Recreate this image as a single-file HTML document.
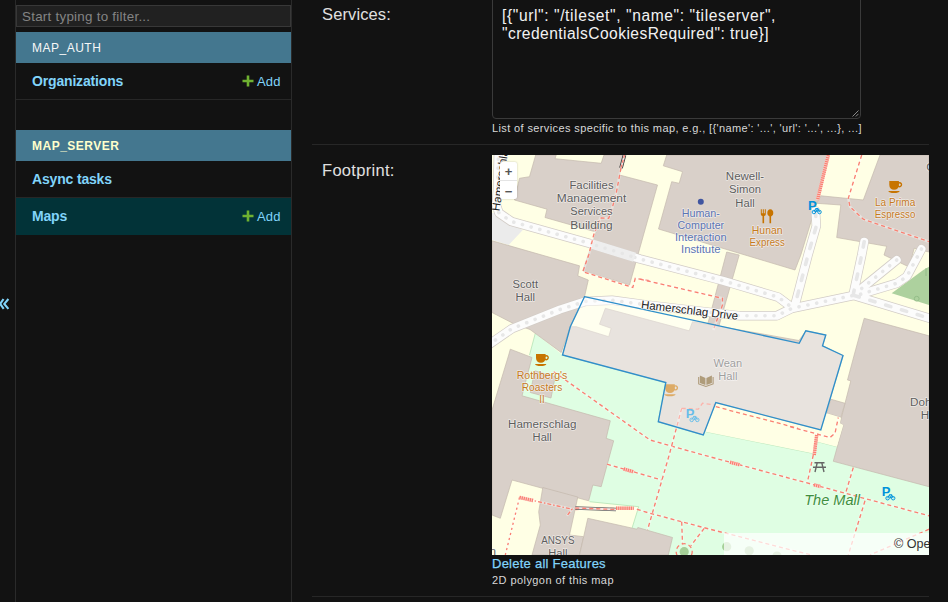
<!DOCTYPE html>
<html lang="en">
<head>
<meta charset="utf-8">
<title>Change map | Django site admin</title>
<style>
  html, body { margin: 0; padding: 0; }
  body {
    width: 948px; height: 602px; overflow: hidden; position: relative;
    background: #121212; color: #eeeeee;
    font-family: "Liberation Sans", sans-serif;
  }
  .abs { position: absolute; }
  /* ---------- sidebar ---------- */
    #sidebar { left: 15px; top: 0; width: 275px; height: 602px; border-left: 1px solid #2a2a2a; border-right: 1px solid #2a2a2a; }
  #filter {
    left: 16px; top: 5px; width: 273px; height: 20px; border: 1px solid #383838; background: #212121;
    color: #848484; font-size: 13.4px; line-height: 21px; padding: 0; text-indent: 5px; letter-spacing: 0.25px;
  }
  .caption { left: 16px; width: 275px; height: 31px; background: #44778f; color: #f7f7f7; font-size: 12px; line-height: 33px; letter-spacing: 0.5px; text-indent: 16px; }
  .caption.cur { color: #ffffcc; font-weight: 700; letter-spacing: 0.5px; }
  .row { left: 16px; width: 275px; height: 36px; border-bottom: 1px solid #272727; }
  .row.sel { background: #023338; border-bottom-color: #023338; }
  .row a.name { position: absolute; left: 16px; top: 0; line-height: 36px; font-size: 14px; font-weight: 700; color: #81d4fa; text-decoration: none; letter-spacing: -0.17px; }
  .row a.add { position: absolute; left: 241px; top: 0; line-height: 37px; font-size: 13px; color: #81d4fa; text-decoration: none; letter-spacing: 0.2px; }
  .row svg.plus { position: absolute; left: 226px; top: 11.6px; }
  /* ---------- main ---------- */
  .label { left: 322px; font-size: 16.5px; letter-spacing: 0.3px; color: #e0e0e0; line-height: 20px; }
  #ta {
    left: 492px; top: -6px; width: 367px; height: 123px; border: 1px solid #3a3a3a; border-radius: 4px; background: #121212;
  }
  #tatext { left: 502px; top: 7px; font-size: 15.6px; line-height: 17.8px; color: #f2f2f2; letter-spacing: 0.63px; white-space: pre; }
  .help { left: 492px; font-size: 11px; line-height: 14px; color: #d8d8d8; white-space: pre; }
  .hr { left: 312px; width: 617px; height: 1px; background: #272727; }
  #map { left: 492px; top: 155px; width: 437px; height: 400px; overflow: hidden; background: #ffffe5; }
  #map svg { position: absolute; left: 0; top: 0; display: block; }
  #zoomctl { left: 8px; top: 7px; width: 17px; height: 37px; background: #ffffff; border-radius: 2px; box-shadow: 0 0 2px rgba(0,0,0,0.25); }
  #zoomctl i { position: absolute; left: 0; width: 17px; height: 18px; font-style: normal; color: #555; font-size: 13px; line-height: 18px; text-align: center; font-weight: 700; }
  #zoomctl .sep { position: absolute; left: 0; top: 18px; width: 17px; height: 1px; background: #e4e4e4; }
  #attr { left: 232px; top: 378px; width: 300px; height: 22px; background: rgba(255,255,255,0.72); color: #333; font-size: 12.6px; line-height: 22px; text-indent: 170px; white-space: nowrap; }
  #del { left: 492px; top: 555.6px; font-size: 13px; line-height: 16px; color: #81d4fa; letter-spacing: 0.25px; white-space: pre; -webkit-text-stroke: 0.25px #81d4fa; }
</style>
</head>
<body>

<!-- sidebar -->
<svg id="toggle" class="abs" style="left:0;top:295px" width="12" height="18" viewBox="0 295 12 18"><path d="M3.5,299 L0.2,303.9 L3.7,308.8 M8.4,299 L4.3,303.9 L8.4,308.8" fill="none" stroke="#81d4fa" stroke-width="2.1"/></svg>
<div id="sidebar" class="abs"></div>
<div id="filter" class="abs">Start typing to filter...</div>

<div class="abs caption" style="top:32px">MAP_AUTH</div>
<div class="abs row" style="top:63px">
  <a class="name">Organizations</a>
  <svg class="plus" width="12" height="12" viewBox="0 0 12 12"><path d="M4.7,0.5 H7.3 V4.7 H11.5 V7.3 H7.3 V11.5 H4.7 V7.3 H0.5 V4.7 H4.7 Z" fill="#6fb131"/></svg>
  <a class="add">Add</a>
</div>

<div class="abs caption cur" style="top:130px">MAP_SERVER</div>
<div class="abs row" style="top:161px">
  <a class="name">Async tasks</a>
</div>
<div class="abs row sel" style="top:198px">
  <a class="name">Maps</a>
  <svg class="plus" width="12" height="12" viewBox="0 0 12 12"><path d="M4.7,0.5 H7.3 V4.7 H11.5 V7.3 H7.3 V11.5 H4.7 V7.3 H0.5 V4.7 H4.7 Z" fill="#6fb131"/></svg>
  <a class="add">Add</a>
</div>

<!-- main form -->
<div class="abs label" style="top:4px; letter-spacing:0.12px">Services:</div>
<div id="ta" class="abs"></div>
<div id="tatext" class="abs"><span style="letter-spacing:0.6px">[{"url": "/tileset", "name": "tileserver",</span>
<span style="letter-spacing:0.44px">"credentialsCookiesRequired": true}]</span></div>
<svg class="abs" style="left:850px;top:108px" width="9" height="9" viewBox="0 0 9 9"><path d="M8.5,2.5 L2.5,8.5 M8.5,5.8 L5.8,8.5" stroke="#8a8a8a" stroke-width="1" fill="none"/></svg>
<div class="abs help" style="top:121px; letter-spacing:0.38px">List of services specific to this map, e.g., [{'name': '...', 'url': '...', ...}, ...]</div>
<div class="abs hr" style="top:144px"></div>

<div class="abs label" style="top:160px">Footprint:</div>
<div id="map" class="abs">
<svg width="437" height="400" viewBox="492 155 437 400" font-family="Liberation Sans, sans-serif">
<rect x="492" y="155" width="437" height="400" fill="#ffffe5"/>
<polygon points="535.3,333.3 562.5,355 665.8,382.5 658.3,421.7 703.3,435 705.8,431.7 812.5,453.3 817.5,441.7 840,447 929,470 929,555 570,555 632,528.3 638.7,506.7 589.5,501.7 575,480 520,400 529.5,355" fill="#dffee3"/>
<polygon points="929,266.7 923.3,270 891.7,293.3 929,305" fill="#add19e"/>
<path d="M705.8,431.7 L812.5,453.3 M817.5,441.7 L836.7,446.7 M535.3,333.3 L529.5,355 M589.5,501.7 L638.7,506.7 L632,528.3" stroke="#b5e3b5" stroke-width="0.8" fill="none"/>
<circle cx="916.7" cy="298.7" r="2.4" fill="none" stroke="#8db883" stroke-width="0.8"/><path d="M926,268 V276" stroke="#8db883" stroke-width="0.8"/>
<polygon points="492,213 494.5,212.5 502,220 522.8,230 508.7,245 492,240" fill="#ebebeb"/>
<polygon points="535.7,155 556.2,155 555,158.7 601.2,163.3 604,155 624.5,155 619.5,175 657.5,185 629.5,285 582.8,270.8 596,232 545,217.5 547,209.2 514.5,200 519.5,178.3 529.5,176.7" fill="#d9d0c9" stroke="#c4b9ae" stroke-width="0.7"/>
<polygon points="666.7,155 663.3,165.8 682.5,171.7 679.2,183.3 671.7,181.7 658.5,229 795,270 800.8,255 816.7,203.3 827.5,155" fill="#d9d0c9" stroke="#c4b9ae" stroke-width="0.7"/>
<polygon points="880,155 929,155 929,252 914.2,248.3 909.2,267 884,255 886.7,246.3 836.7,237.5 840.8,205 816.7,203.3 820.8,195.8 863.3,200" fill="#d9d0c9" stroke="#c4b9ae" stroke-width="0.7"/>
<polygon points="726.7,252 739.2,255 718.3,328.3 707.5,325" fill="#d9d0c9" stroke="#c4b9ae" stroke-width="0.7"/>
<polygon points="492,240.8 579.5,265.8 577.8,275.8 588.3,280 584.5,296.7 570.3,326.7 561.2,352.5 530,329.5 513.7,323.7 492,312.5" fill="#d9d0c9" stroke="#c4b9ae" stroke-width="0.7"/>
<polygon points="864.2,318.3 929,335.8 929,486.7 833.3,461.3 843.3,425 840,423.3 845,403.3 850.8,380.8 847.5,380 854.2,355" fill="#d9d0c9" stroke="#c4b9ae" stroke-width="0.7"/>
<polygon points="830.8,399.2 845,403.3 840.8,417.5 826.7,413.3" fill="#d9d0c9" stroke="#c4b9ae" stroke-width="0.7"/>
<polygon points="492,410 508.7,355 510.3,349.2 532,357.5 522,395.8 610.3,420.8 606.2,438.3 613.7,440.8 601.2,486.7 592.8,485 588.7,500.8 512,480 500.3,518.3 492,515" fill="#d9d0c9" stroke="#c4b9ae" stroke-width="0.7"/>
<polygon points="534.8,370.8 555.2,376.6 551,398 530.3,392.5" fill="#d9d0c9" stroke="#c4b9ae" stroke-width="0.7"/>
<polygon points="542.8,487.5 577.8,497 569.5,535 583.7,536.7 579.5,555 532,555 540.3,525 538.7,511.7" fill="#d9d0c9" stroke="#c4b9ae" stroke-width="0.7"/>
<polygon points="587.8,518.3 637,529.2 637.8,527.5 672.5,537.5 668.3,555 579.5,555 583.7,536.7" fill="#d9d0c9" stroke="#c4b9ae" stroke-width="0.7"/>
<polygon points="576.2,326.7 608.7,336.7 611.2,328.3 599.5,324.2 605.3,308.3 689.2,330.8 692.5,321.7 712,325 799,340.5 805.8,330.8 825.8,335 822.5,345.8 843,355.5 820.8,430 715.8,402.5 703.3,435 658.3,421.7 665.8,382.5 562.5,355 570.3,326.7" fill="#d9d0c9" stroke="#c4b9ae" stroke-width="0.7"/>
<polygon points="715.8,403.3 798,425 820.8,430 826.7,413.3 840.8,417.5 840,423.3 843.3,425 836.7,446.7 817.5,441.7 812.5,453.3 705.8,431.7" fill="#ffffe5"/>
<polyline points="498.5,150 497.5,190 496.3,205 499,213 511.4,221.5 590,243.5 640,259 723.3,280.8 778.3,297.2 792,307.5" fill="none" stroke="#d2ccc6" stroke-width="9.4" stroke-linecap="round" stroke-linejoin="round"/>
<polyline points="488,345.2 512,328.6 560,309.5 585.3,301.4 612,300.2 650,305.3 740,315.8 776.7,315.8 792,308.3 851.7,295.8 855,294.5" fill="none" stroke="#d2ccc6" stroke-width="9.4" stroke-linecap="round" stroke-linejoin="round"/>
<polyline points="854,295.5 932,319" fill="none" stroke="#d2ccc6" stroke-width="9.4" stroke-linecap="round" stroke-linejoin="round"/>
<polyline points="815.5,211 816.3,226 808,255 795,305" fill="none" stroke="#d2ccc6" stroke-width="9.4" stroke-linecap="round" stroke-linejoin="round"/>
<polyline points="864.2,241.7 861.7,255 853.5,293.3" fill="none" stroke="#d2ccc6" stroke-width="9.4" stroke-linecap="round" stroke-linejoin="round"/>
<polyline points="896.7,260 856.7,292.5" fill="none" stroke="#d2ccc6" stroke-width="9.4" stroke-linecap="round" stroke-linejoin="round"/>
<polyline points="921.5,249 918.3,255 906.7,276.7 896.7,283.3 858,295" fill="none" stroke="#d2ccc6" stroke-width="9.4" stroke-linecap="round" stroke-linejoin="round"/>
<polyline points="498.5,150 497.5,190 496.3,205 499,213 511.4,221.5 590,243.5 640,259 723.3,280.8 778.3,297.2 792,307.5" fill="none" stroke="#fcfcfc" stroke-width="8" stroke-linecap="round" stroke-linejoin="round"/>
<polyline points="488,345.2 512,328.6 560,309.5 585.3,301.4 612,300.2 650,305.3 740,315.8 776.7,315.8 792,308.3 851.7,295.8 855,294.5" fill="none" stroke="#fcfcfc" stroke-width="8" stroke-linecap="round" stroke-linejoin="round"/>
<polyline points="854,295.5 932,319" fill="none" stroke="#fcfcfc" stroke-width="8" stroke-linecap="round" stroke-linejoin="round"/>
<polyline points="815.5,211 816.3,226 808,255 795,305" fill="none" stroke="#fcfcfc" stroke-width="8" stroke-linecap="round" stroke-linejoin="round"/>
<polyline points="864.2,241.7 861.7,255 853.5,293.3" fill="none" stroke="#fcfcfc" stroke-width="8" stroke-linecap="round" stroke-linejoin="round"/>
<polyline points="896.7,260 856.7,292.5" fill="none" stroke="#fcfcfc" stroke-width="8" stroke-linecap="round" stroke-linejoin="round"/>
<polyline points="921.5,249 918.3,255 906.7,276.7 896.7,283.3 858,295" fill="none" stroke="#fcfcfc" stroke-width="8" stroke-linecap="round" stroke-linejoin="round"/>
<polyline points="498.5,150 497.5,190 496.3,205 499,213 511.4,221.5 590,243.5 640,259 723.3,280.8 778.3,297.2 792,307.5" fill="none" stroke="#e7e7e7" stroke-width="3.6" stroke-linecap="round" stroke-dasharray="0.1 8.9"/>
<polyline points="488,345.2 512,328.6 560,309.5 585.3,301.4 612,300.2 650,305.3 740,315.8 776.7,315.8 792,308.3 851.7,295.8 855,294.5" fill="none" stroke="#e7e7e7" stroke-width="3.6" stroke-linecap="round" stroke-dasharray="0.1 8.9"/>
<polyline points="854,295.5 932,319" fill="none" stroke="#e7e7e7" stroke-width="3.6" stroke-linecap="round" stroke-dasharray="5.5 11"/>
<polyline points="815.5,211 816.3,226 808,255 795,305" fill="none" stroke="#e7e7e7" stroke-width="3.6" stroke-linecap="round" stroke-dasharray="5.5 11"/>
<polyline points="864.2,241.7 861.7,255 853.5,293.3" fill="none" stroke="#e7e7e7" stroke-width="3.6" stroke-linecap="round" stroke-dasharray="5.5 11"/>
<polyline points="896.7,260 856.7,292.5" fill="none" stroke="#e7e7e7" stroke-width="3.6" stroke-linecap="round" stroke-dasharray="0.1 8.9"/>
<polyline points="921.5,249 918.3,255 906.7,276.7 896.7,283.3 858,295" fill="none" stroke="#e7e7e7" stroke-width="3.6" stroke-linecap="round" stroke-dasharray="0.1 8.9"/>
<path d="M592.6,244.3 L634.6,257.3" stroke="#eeeeee" stroke-width="9.4" fill="none"/>
<path d="M592.6,244.3 L634.6,257.3" stroke="#e6e6e6" stroke-width="3.4" stroke-linecap="round" stroke-dasharray="0.1 8.9" stroke-dashoffset="-4" fill="none"/>
<polyline points="621,168 616.2,193.3 611.2,211.7 608.7,218.3 600.3,218 593.7,235 588.7,255 582.8,271.7 632.8,287.5 635.3,278.3 650,280.8" fill="none" stroke="#ffffff" stroke-opacity="0.38" stroke-width="2.6"/>
<polyline points="621,168 616.2,193.3 611.2,211.7 608.7,218.3 600.3,218 593.7,235 588.7,255 582.8,271.7 632.8,287.5 635.3,278.3 650,280.8" fill="none" stroke="#fa8072" stroke-width="1.35" stroke-dasharray="4 3"/>
<polyline points="640,279.2 722.5,298.3 722.5,305 713.3,330" fill="none" stroke="#ffffff" stroke-opacity="0.38" stroke-width="2.6"/>
<polyline points="640,279.2 722.5,298.3 722.5,305 713.3,330" fill="none" stroke="#fa8072" stroke-width="1.35" stroke-dasharray="4 3"/>
<polyline points="861.7,155 848.3,198.3 850,206.7 863.3,219.2 929,241.7" fill="none" stroke="#ffffff" stroke-opacity="0.38" stroke-width="2.6"/>
<polyline points="861.7,155 848.3,198.3 850,206.7 863.3,219.2 929,241.7" fill="none" stroke="#fa8072" stroke-width="1.35" stroke-dasharray="4 3"/>
<polyline points="553.7,371.7 650,440 703.3,455 929,515.8" fill="none" stroke="#ffffff" stroke-opacity="0.38" stroke-width="2.6"/>
<polyline points="553.7,371.7 650,440 703.3,455 929,515.8" fill="none" stroke="#fa8072" stroke-width="1.35" stroke-dasharray="4 3"/>
<polyline points="607,464.2 661.7,480" fill="none" stroke="#ffffff" stroke-opacity="0.38" stroke-width="2.6"/>
<polyline points="607,464.2 661.7,480" fill="none" stroke="#fa8072" stroke-width="1.35" stroke-dasharray="4 3"/>
<polyline points="681.7,408.3 669.2,455 647.5,530" fill="none" stroke="#ffffff" stroke-opacity="0.38" stroke-width="2.6"/>
<polyline points="681.7,408.3 669.2,455 647.5,530" fill="none" stroke="#fa8072" stroke-width="1.35" stroke-dasharray="4 3"/>
<polyline points="616,508.3 633.7,508.3 650,513.3 703.3,527.5 798,551.7 812,555" fill="none" stroke="#ffffff" stroke-opacity="0.38" stroke-width="2.6"/>
<polyline points="616,508.3 633.7,508.3 650,513.3 703.3,527.5 798,551.7 812,555" fill="none" stroke="#fa8072" stroke-width="1.35" stroke-dasharray="4 3"/>
<polyline points="790,426.7 830,437.5 835,433.3 838.3,417.5" fill="none" stroke="#ffffff" stroke-opacity="0.38" stroke-width="2.6"/>
<polyline points="790,426.7 830,437.5 835,433.3 838.3,417.5" fill="none" stroke="#fa8072" stroke-width="1.35" stroke-dasharray="4 3"/>
<polyline points="519.5,497.5 572,509.2 567,515.8" fill="none" stroke="#ffffff" stroke-opacity="0.38" stroke-width="2.6"/>
<polyline points="519.5,497.5 572,509.2 567,515.8" fill="none" stroke="#fa8072" stroke-width="1.35" stroke-dasharray="4 2 1.5 2"/>
<polyline points="519.5,497.5 505.3,555" fill="none" stroke="#ffffff" stroke-opacity="0.38" stroke-width="2.6"/>
<polyline points="519.5,497.5 505.3,555" fill="none" stroke="#fa8072" stroke-width="1.35" stroke-dasharray="2.2 3"/>
<polyline points="575.3,509.5 616,508.3" fill="none" stroke="#ffffff" stroke-opacity="0.38" stroke-width="2.6"/>
<polyline points="575.3,509.5 616,508.3" fill="none" stroke="#fa8072" stroke-width="1.35" stroke-dasharray="4 3"/>
<polyline points="681.7,521.7 682.5,544" fill="none" stroke="#ffffff" stroke-opacity="0.38" stroke-width="2.6"/>
<polyline points="681.7,521.7 682.5,544" fill="none" stroke="#fa8072" stroke-width="1.35" stroke-dasharray="4 3"/>
<polyline points="704.2,528.3 690.8,545.8" fill="none" stroke="#ffffff" stroke-opacity="0.38" stroke-width="2.6"/>
<polyline points="704.2,528.3 690.8,545.8" fill="none" stroke="#fa8072" stroke-width="1.35" stroke-dasharray="4 3"/>
<polyline points="813.3,455 807.5,481.7" fill="none" stroke="#ffffff" stroke-opacity="0.38" stroke-width="2.6"/>
<polyline points="813.3,455 807.5,481.7" fill="none" stroke="#fa8072" stroke-width="1.35" stroke-dasharray="4 3"/>
<polyline points="853.3,467.5 845.8,492.5" fill="none" stroke="#ffffff" stroke-opacity="0.38" stroke-width="2.6"/>
<polyline points="853.3,467.5 845.8,492.5" fill="none" stroke="#fa8072" stroke-width="1.35" stroke-dasharray="4 3"/>
<polyline points="865,500.8 848.3,555" fill="none" stroke="#ffffff" stroke-opacity="0.38" stroke-width="2.6"/>
<polyline points="865,500.8 848.3,555" fill="none" stroke="#fa8072" stroke-width="1.35" stroke-dasharray="4 3"/>
<polyline points="929,529.2 870,555" fill="none" stroke="#ffffff" stroke-opacity="0.38" stroke-width="2.6"/>
<polyline points="929,529.2 870,555" fill="none" stroke="#fa8072" stroke-width="1.35" stroke-dasharray="4 3"/>
<circle cx="684.2" cy="551.7" r="8" fill="none" stroke="#fa8072" stroke-width="1.3" stroke-dasharray="4 3"/>
<polyline points="828.3,155 817.5,200" fill="none" stroke="#fbd3cd" stroke-width="3.4"/>
<polyline points="828.3,155 817.5,200" fill="none" stroke="#fa8072" stroke-width="3.4" stroke-dasharray="1.3 0.8"/>
<polyline points="816.7,435 814.2,455" fill="none" stroke="#fbd3cd" stroke-width="3.4"/>
<polyline points="816.7,435 814.2,455" fill="none" stroke="#fa8072" stroke-width="3.4" stroke-dasharray="1.3 0.8"/>
<polyline points="519.5,497.5 533,500.5" fill="none" stroke="#fbd3cd" stroke-width="3.4"/>
<polyline points="519.5,497.5 533,500.5" fill="none" stroke="#fa8072" stroke-width="3.4" stroke-dasharray="1.3 0.8"/>
<polyline points="616,508.3 633.7,508.3" fill="none" stroke="#fbd3cd" stroke-width="3.4"/>
<polyline points="616,508.3 633.7,508.3" fill="none" stroke="#fa8072" stroke-width="3.4" stroke-dasharray="1.3 0.8"/>
<polyline points="730,462.2 740,464.9" fill="none" stroke="#fbd3cd" stroke-width="3.4"/>
<polyline points="730,462.2 740,464.9" fill="none" stroke="#fa8072" stroke-width="3.4" stroke-dasharray="1.3 0.8"/>
<polyline points="623.7,469 633.7,471.9" fill="none" stroke="#fbd3cd" stroke-width="3.4"/>
<polyline points="623.7,469 633.7,471.9" fill="none" stroke="#fa8072" stroke-width="3.4" stroke-dasharray="1.3 0.8"/>
<polyline points="814,484.8 820.5,486.5" fill="none" stroke="#fbd3cd" stroke-width="3.4"/>
<polyline points="814,484.8 820.5,486.5" fill="none" stroke="#fa8072" stroke-width="3.4" stroke-dasharray="1.3 0.8"/>
<path d="M624.5,155 L621,168" stroke="#333" stroke-width="3.6" fill="none"/><path d="M624.5,155 L621,168" stroke="#f3e6e4" stroke-width="2" fill="none"/><path d="M624.5,155 L621,168" stroke="#fa8072" stroke-width="1.3" stroke-dasharray="3 2" fill="none"/>
<path d="M575.3,508 L616,509.5" stroke="#666" stroke-width="3.4" fill="none"/><path d="M575.3,508 L616,509.5" stroke="#f3e6e4" stroke-width="2" fill="none"/><path d="M575.3,508 L616,509.5" stroke="#fa8072" stroke-width="1.3" stroke-dasharray="4 3" fill="none"/>
<circle cx="684.2" cy="551.7" r="4.6" fill="#a5cf97"/>
<circle cx="726.7" cy="546.7" r="4.6" fill="#a5cf97"/>
<circle cx="749.2" cy="550.8" r="4.6" fill="#a5cf97"/>
<circle cx="777" cy="556" r="4.6" fill="#a5cf97"/>
<polyline points="681.7,408.3 698.3,409.2 702.5,403.3 715,405" fill="none" stroke="#fa8072" stroke-width="1.3" stroke-dasharray="4 3"/>
<polyline points="715.8,406.7 798,428.3" fill="none" stroke="#fa8072" stroke-width="1.3" stroke-dasharray="4 3"/>
<text x="727.8" y="366.7" font-size="11.7" fill="#5e5e5e" text-anchor="middle" stroke="#ffffff" stroke-opacity="0.55" stroke-width="1.5" paint-order="stroke" stroke-linejoin="round" textLength="28.7" lengthAdjust="spacingAndGlyphs" >Wean</text><text x="727.8" y="379.9" font-size="11.7" fill="#5e5e5e" text-anchor="middle" stroke="#ffffff" stroke-opacity="0.55" stroke-width="1.5" paint-order="stroke" stroke-linejoin="round" textLength="19.2" lengthAdjust="spacingAndGlyphs" >Hall</text>
<g transform="translate(664.2 384.2) scale(1)" fill="#c77400"><path d="M1,0 H10.6 V4 C10.6,7 8.6,8.7 5.8,8.7 C3,8.7 1,7 1,4 Z"/><path d="M11.2,1 A2.7,2.7 0 1 1 11.19,1 Z M11.2,2.4 A1.3,1.3 0 1 0 11.21,2.4 Z" fill-rule="evenodd"/><path d="M0,10 H11.4 Q10.6,12 5.7,12 Q0.8,12 0,10 Z"/></g>
<g transform="translate(685.8 408.2)"><text x="0" y="9.6" font-size="13" font-weight="700" fill="#0092da">P</text><g fill="none" stroke="#0092da" stroke-width="0.95"><circle cx="5.9" cy="11.7" r="1.75"/><circle cx="11.5" cy="11.7" r="1.75"/><path d="M5.9,11.7 L7.8,8.2 H10 L11.5,11.7 M7.8,8.2 L8.9,11.7 L10,8.2"/></g></g>
<g transform="translate(699.3 375.3)" fill="#7a5a22"><path d="M0.6,0.2 L6.1,2.6 V9.6 L0.6,7.6 Z M12.6,0.2 L7.1,2.6 V9.6 L12.6,7.6 Z"/><path d="M-0.6,1.6 V8.6 L6.6,11.2 L13.8,8.6 V1.6" fill="none" stroke="#7a5a22" stroke-width="1.1"/></g>
<polygon points="584.5,296.7 799.2,343.3 805.8,330.8 825.8,335 822.5,345.8 843,355.5 820.8,430 715.8,402.5 703.3,435 658.3,421.7 665.8,382.5 562.5,355 570.3,326.7" fill="#ffffff" fill-opacity="0.4" stroke="#2f8fca" stroke-width="1.35"/>
<text x="591.5" y="189.2" font-size="11.7" fill="#5e5e5e" text-anchor="middle" stroke="#ffffff" stroke-opacity="0.55" stroke-width="1.5" paint-order="stroke" stroke-linejoin="round" textLength="44.2" lengthAdjust="spacingAndGlyphs" >Facilities</text><text x="591.5" y="202.3" font-size="11.7" fill="#5e5e5e" text-anchor="middle" stroke="#ffffff" stroke-opacity="0.55" stroke-width="1.5" paint-order="stroke" stroke-linejoin="round" textLength="69.5" lengthAdjust="spacingAndGlyphs" >Management</text><text x="591.5" y="215.4" font-size="11.7" fill="#5e5e5e" text-anchor="middle" stroke="#ffffff" stroke-opacity="0.55" stroke-width="1.5" paint-order="stroke" stroke-linejoin="round" textLength="42.3" lengthAdjust="spacingAndGlyphs" >Services</text><text x="591.5" y="228.5" font-size="11.7" fill="#5e5e5e" text-anchor="middle" stroke="#ffffff" stroke-opacity="0.55" stroke-width="1.5" paint-order="stroke" stroke-linejoin="round" textLength="42.3" lengthAdjust="spacingAndGlyphs" >Building</text>
<text x="745" y="180.3" font-size="11.7" fill="#5e5e5e" text-anchor="middle" stroke="#ffffff" stroke-opacity="0.55" stroke-width="1.5" paint-order="stroke" stroke-linejoin="round" textLength="38.3" lengthAdjust="spacingAndGlyphs" >Newell-</text><text x="745" y="193.4" font-size="11.7" fill="#5e5e5e" text-anchor="middle" stroke="#ffffff" stroke-opacity="0.55" stroke-width="1.5" paint-order="stroke" stroke-linejoin="round" textLength="32" lengthAdjust="spacingAndGlyphs" >Simon</text><text x="745" y="206.5" font-size="11.7" fill="#5e5e5e" text-anchor="middle" stroke="#ffffff" stroke-opacity="0.55" stroke-width="1.5" paint-order="stroke" stroke-linejoin="round" textLength="19.3" lengthAdjust="spacingAndGlyphs" >Hall</text>
<text x="700.8" y="217" font-size="10.6" fill="#5b74b4" text-anchor="middle" stroke="#ffffff" stroke-opacity="0.55" stroke-width="1.5" paint-order="stroke" stroke-linejoin="round" textLength="38.3" lengthAdjust="spacingAndGlyphs" >Human-</text><text x="700.8" y="229.1" font-size="10.6" fill="#5b74b4" text-anchor="middle" stroke="#ffffff" stroke-opacity="0.55" stroke-width="1.5" paint-order="stroke" stroke-linejoin="round" textLength="46.7" lengthAdjust="spacingAndGlyphs" >Computer</text><text x="700.8" y="241.2" font-size="10.6" fill="#5b74b4" text-anchor="middle" stroke="#ffffff" stroke-opacity="0.55" stroke-width="1.5" paint-order="stroke" stroke-linejoin="round" textLength="51.7" lengthAdjust="spacingAndGlyphs" >Interaction</text><text x="700.8" y="253.3" font-size="10.6" fill="#5b74b4" text-anchor="middle" stroke="#ffffff" stroke-opacity="0.55" stroke-width="1.5" paint-order="stroke" stroke-linejoin="round" textLength="39.5" lengthAdjust="spacingAndGlyphs" >Institute</text>
<circle cx="700.8" cy="201.7" r="3" fill="#4055a0"/>
<text x="767.2" y="234.2" font-size="10.4" fill="#c67a1e" text-anchor="middle" stroke="#ffffff" stroke-opacity="0.55" stroke-width="1.5" paint-order="stroke" stroke-linejoin="round" textLength="30.8" lengthAdjust="spacingAndGlyphs" >Hunan</text><text x="767.2" y="246.3" font-size="10.4" fill="#c67a1e" text-anchor="middle" stroke="#ffffff" stroke-opacity="0.55" stroke-width="1.5" paint-order="stroke" stroke-linejoin="round" textLength="35.3" lengthAdjust="spacingAndGlyphs" >Express</text>
<text x="895.1" y="205.5" font-size="10.4" fill="#c67a1e" text-anchor="middle" stroke="#ffffff" stroke-opacity="0.55" stroke-width="1.5" paint-order="stroke" stroke-linejoin="round" textLength="40.4" lengthAdjust="spacingAndGlyphs" >La Prima</text><text x="895.1" y="217.5" font-size="10.4" fill="#c67a1e" text-anchor="middle" stroke="#ffffff" stroke-opacity="0.55" stroke-width="1.5" paint-order="stroke" stroke-linejoin="round" textLength="40.5" lengthAdjust="spacingAndGlyphs" >Espresso</text>
<text x="525.3" y="287.5" font-size="11.7" fill="#5e5e5e" text-anchor="middle" stroke="#ffffff" stroke-opacity="0.55" stroke-width="1.5" paint-order="stroke" stroke-linejoin="round" textLength="25.5" lengthAdjust="spacingAndGlyphs" >Scott</text><text x="525.3" y="300.7" font-size="11.7" fill="#5e5e5e" text-anchor="middle" stroke="#ffffff" stroke-opacity="0.55" stroke-width="1.5" paint-order="stroke" stroke-linejoin="round" textLength="19.6" lengthAdjust="spacingAndGlyphs" >Hall</text>
<text x="542" y="379" font-size="10.4" fill="#c67a1e" text-anchor="middle" stroke="#ffffff" stroke-opacity="0.55" stroke-width="1.5" paint-order="stroke" stroke-linejoin="round" textLength="50.7" lengthAdjust="spacingAndGlyphs" >Rothberg's</text><text x="542" y="391" font-size="10.4" fill="#c67a1e" text-anchor="middle" stroke="#ffffff" stroke-opacity="0.55" stroke-width="1.5" paint-order="stroke" stroke-linejoin="round" textLength="40.7" lengthAdjust="spacingAndGlyphs" >Roasters</text><text x="542" y="403" font-size="10.4" fill="#c67a1e" text-anchor="middle" stroke="#ffffff" stroke-opacity="0.55" stroke-width="1.5" paint-order="stroke" stroke-linejoin="round" textLength="5.5" lengthAdjust="spacingAndGlyphs" >II</text>
<text x="542.2" y="428" font-size="11.7" fill="#5e5e5e" text-anchor="middle" stroke="#ffffff" stroke-opacity="0.55" stroke-width="1.5" paint-order="stroke" stroke-linejoin="round" textLength="68.3" lengthAdjust="spacingAndGlyphs" >Hamerschlag</text><text x="542.2" y="440.6" font-size="11.7" fill="#5e5e5e" text-anchor="middle" stroke="#ffffff" stroke-opacity="0.55" stroke-width="1.5" paint-order="stroke" stroke-linejoin="round" textLength="19.2" lengthAdjust="spacingAndGlyphs" >Hall</text>
<text x="496" y="555" font-size="11.7" fill="#5e5e5e" text-anchor="end" stroke="#ffffff" stroke-opacity="0.55" stroke-width="1.5" paint-order="stroke" stroke-linejoin="round" >n</text>
<text x="557.8" y="544" font-size="11.7" fill="#5e5e5e" text-anchor="middle" stroke="#ffffff" stroke-opacity="0.55" stroke-width="1.5" paint-order="stroke" stroke-linejoin="round" textLength="33.3" lengthAdjust="spacingAndGlyphs" >ANSYS</text><text x="557.8" y="556.9" font-size="11.7" fill="#5e5e5e" text-anchor="middle" stroke="#ffffff" stroke-opacity="0.55" stroke-width="1.5" paint-order="stroke" stroke-linejoin="round" textLength="19.2" lengthAdjust="spacingAndGlyphs" >Hall</text>
<text x="926.3" y="170.6" font-size="11.7" fill="#5e5e5e" text-anchor="start" stroke="#ffffff" stroke-opacity="0.55" stroke-width="1.5" paint-order="stroke" stroke-linejoin="round" >Center</text>
<text x="910" y="405.8" font-size="11.7" fill="#5e5e5e" text-anchor="start" stroke="#ffffff" stroke-opacity="0.55" stroke-width="1.5" paint-order="stroke" stroke-linejoin="round" >Doherty</text>
<text x="920.8" y="419" font-size="11.7" fill="#5e5e5e" text-anchor="start" stroke="#ffffff" stroke-opacity="0.55" stroke-width="1.5" paint-order="stroke" stroke-linejoin="round" >Hall</text>
<text x="640.8" y="308.2" font-size="11.4" fill="#222222" text-anchor="start" stroke="#ffffff" stroke-opacity="0.8" stroke-width="1.5" paint-order="stroke" stroke-linejoin="round" textLength="97.4" lengthAdjust="spacingAndGlyphs" transform="rotate(6.9 640.8 308.2)">Hamerschlag Drive</text>
<text x="499.6" y="211.5" font-size="11.6" fill="#222222" text-anchor="start" stroke="#ffffff" stroke-opacity="0.8" stroke-width="1.5" paint-order="stroke" stroke-linejoin="round" transform="rotate(-82 499.6 211.5)">Hamerschlag Drive</text>
<text x="804.2" y="504.5" font-size="14.2" fill="#3f8f3f" text-anchor="start" stroke="#ffffff" stroke-opacity="0.3" stroke-width="1.5" paint-order="stroke" stroke-linejoin="round" textLength="55.8" lengthAdjust="spacingAndGlyphs" font-style="italic">The Mall</text>
<g transform="translate(888.3 181) scale(1)" fill="#c77400"><path d="M1,0 H10.6 V4 C10.6,7 8.6,8.7 5.8,8.7 C3,8.7 1,7 1,4 Z"/><path d="M11.2,1 A2.7,2.7 0 1 1 11.19,1 Z M11.2,2.4 A1.3,1.3 0 1 0 11.21,2.4 Z" fill-rule="evenodd"/><path d="M0,10 H11.4 Q10.6,12 5.7,12 Q0.8,12 0,10 Z"/></g>
<g transform="translate(535 354) scale(1)" fill="#c77400"><path d="M1,0 H10.6 V4 C10.6,7 8.6,8.7 5.8,8.7 C3,8.7 1,7 1,4 Z"/><path d="M11.2,1 A2.7,2.7 0 1 1 11.19,1 Z M11.2,2.4 A1.3,1.3 0 1 0 11.21,2.4 Z" fill-rule="evenodd"/><path d="M0,10 H11.4 Q10.6,12 5.7,12 Q0.8,12 0,10 Z"/></g>
<g transform="translate(760.8 209.2)" fill="#c77400"><path d="M0,0 H1 V4 H2 V0 H3 V4 H4 V0 H5 V5 Q5,6.6 3.3,6.9 V14 H1.7 V6.9 Q0,6.6 0,5 Z"/><path d="M9.5,0 Q12.5,0.3 12.5,4 Q12.5,6.8 10.3,7.2 V14 H8.7 V7.2 Q6.5,6.8 6.5,4 Q6.5,0.3 9.5,0 Z"/></g>
<g transform="translate(808 200.3)"><text x="0" y="9.6" font-size="13" font-weight="700" fill="#0092da">P</text><g fill="none" stroke="#0092da" stroke-width="0.95"><circle cx="5.9" cy="11.7" r="1.75"/><circle cx="11.5" cy="11.7" r="1.75"/><path d="M5.9,11.7 L7.8,8.2 H10 L11.5,11.7 M7.8,8.2 L8.9,11.7 L10,8.2"/></g></g>
<g transform="translate(881.7 486.5)"><text x="0" y="9.6" font-size="13" font-weight="700" fill="#0092da">P</text><g fill="none" stroke="#0092da" stroke-width="0.95"><circle cx="5.9" cy="11.7" r="1.75"/><circle cx="11.5" cy="11.7" r="1.75"/><path d="M5.9,11.7 L7.8,8.2 H10 L11.5,11.7 M7.8,8.2 L8.9,11.7 L10,8.2"/></g></g>
<g transform="translate(813 462)" stroke="#666" stroke-width="1.4" fill="none"><path d="M1.5,0.8 H11.5 M0,5.2 H13 M4.2,0.8 L2,10 M8.8,0.8 L11,10"/></g>
</svg>
  <div id="zoomctl" class="abs"><i style="top:0.5px">+</i><div class="sep"></div><i style="top:20.5px">&#8722;</i></div>
  <div id="attr" class="abs">&#169; OpenStreetMap contributors.</div>
</div>
<div id="del" class="abs">Delete all Features</div>
<div class="abs help" style="top:573px; letter-spacing:0.43px">2D polygon of this map</div>
<div class="abs hr" style="top:596px"></div>

</body>
</html>
